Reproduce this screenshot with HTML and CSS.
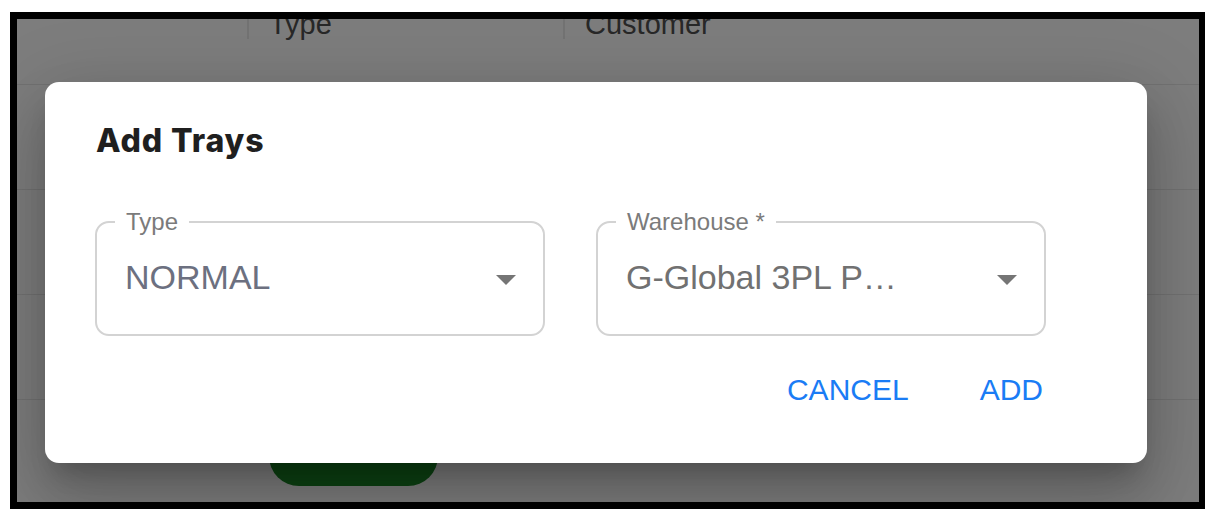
FILE: index.html
```html
<!DOCTYPE html>
<html lang="en">
<head>
<meta charset="utf-8">
<title>Add Trays</title>
<link rel="stylesheet" href="styles.css">
</head>
<body>
<div class="frame">
  <div class="page">
    <div class="table-head">
      <div class="th th-first"></div>
      <div class="th"><span class="sep"></span><span class="th-text">Type</span></div>
      <div class="th"><span class="sep"></span><span class="th-text">Customer</span></div>
    </div>
    <div class="row"></div>
    <div class="row"></div>
    <div class="row"></div>
    <div class="row row-last">
      <div class="cell-first"></div>
      <div class="cell-btn"><span class="green-btn"></span></div>
    </div>
  </div>
  <div class="backdrop">
    <div class="dialog" role="dialog" aria-labelledby="dlg-title">
      <h2 class="dialog-title" id="dlg-title">Add Trays</h2>
      <div class="fields">
        <div class="field">
          <span class="field-label">Type</span>
          <span class="field-value field-value-blue">NORMAL</span>
          <span class="caret"></span>
        </div>
        <div class="field">
          <span class="field-label">Warehouse *</span>
          <span class="field-value">G-Global 3PL P…</span>
          <span class="caret"></span>
        </div>
      </div>
      <div class="actions">
        <button class="btn">CANCEL</button>
        <button class="btn">ADD</button>
      </div>
    </div>
  </div>
</div>
</body>
</html>
```
FILE: styles.css
```css
html, body {
  margin: 0;
  padding: 0;
  background: #ffffff;
}
body {
  width: 1205px;
  height: 509px;
  overflow: hidden;
  font-family: "Liberation Sans", Arial, sans-serif;
}
.frame {
  position: relative;
  margin: 12px 0 0 10px;
  width: 1182px;
  height: 483px;
  border-style: solid;
  border-color: #000;
  border-width: 7px 6px 7px 7px;
  overflow: hidden;
  background: #fff;
}
.page {
  display: flex;
  flex-direction: column;
  background: #fbfbfb;
}
.table-head {
  display: grid;
  grid-template-columns: 230px 316px 1fr;
  height: 65px;
  border-bottom: 1px solid #e4e4e4;
}
.th {
  display: flex;
  align-items: flex-start;
}
.sep {
  width: 2px;
  height: 20px;
  background: #e6e6e6;
}
.th-text {
  font-size: 29px;
  line-height: 10px;
  color: #505050;
  margin-left: 20px;
}
.row {
  height: 104px;
  border-bottom: 1px solid #e4e4e4;
  display: grid;
  grid-template-columns: 252px 1fr;
}
.row-last {
  border-bottom: none;
}
.cell-btn {
  display: flex;
  align-items: flex-start;
  padding-top: 20px;
}
.green-btn {
  width: 169px;
  height: 66px;
  border-radius: 30px;
  background: #1a8626;
}
.backdrop {
  position: absolute;
  inset: 0;
  background: rgba(0, 0, 0, 0.5);
  padding: 63px 0 0 28px;
}
.dialog {
  width: 1102px;
  height: 381px;
  box-sizing: border-box;
  background: #fff;
  border-radius: 14px;
  padding: 39px 101px 0 50px;
  box-shadow: 0 18px 24px -10px rgba(0,0,0,0.2), 0 38px 60px 5px rgba(0,0,0,0.14), 0 14px 74px 12px rgba(0,0,0,0.12);
  display: flex;
  flex-direction: column;
}
.dialog-title {
  margin: 0 0 0 1px;
  font-family: Inter, "Open Sans", sans-serif;
  font-weight: 800;
  font-size: 32px;
  line-height: 40px;
  color: #1f1f1f;
  letter-spacing: 0.9px;
}
.fields {
  display: grid;
  grid-template-columns: 1fr 1fr;
  gap: 51px;
  margin-top: 60px;
}
.field {
  position: relative;
  height: 115px;
  box-sizing: border-box;
  border: 2px solid #d3d3d3;
  border-radius: 14px;
  display: flex;
  align-items: center;
  padding: 0 27px 0 28px;
}
.field-label {
  position: absolute;
  top: -13px;
  left: 18px;
  padding: 0 11px;
  background: #fff;
  font-size: 24px;
  line-height: 24px;
  color: #7b7b7b;
}
.field-value {
  flex: 1;
  font-size: 34px;
  line-height: 40px;
  color: #717171;
  margin-top: -4px;
  white-space: nowrap;
}
.field-value-blue {
  color: #6c7080;
}
.caret {
  width: 0;
  height: 0;
  border-left: 10px solid transparent;
  border-right: 10px solid transparent;
  border-top: 10px solid #757575;
  margin-top: 3px;
}
.actions {
  display: flex;
  justify-content: flex-end;
  gap: 65px;
  margin-top: 29px;
}
.btn {
  font-family: "Liberation Sans", Arial, sans-serif;
  font-size: 30px;
  line-height: 50px;
  height: 50px;
  padding: 0 3px;
  border: none;
  background: transparent;
  color: #1a7cf5;
  cursor: pointer;
}
```
